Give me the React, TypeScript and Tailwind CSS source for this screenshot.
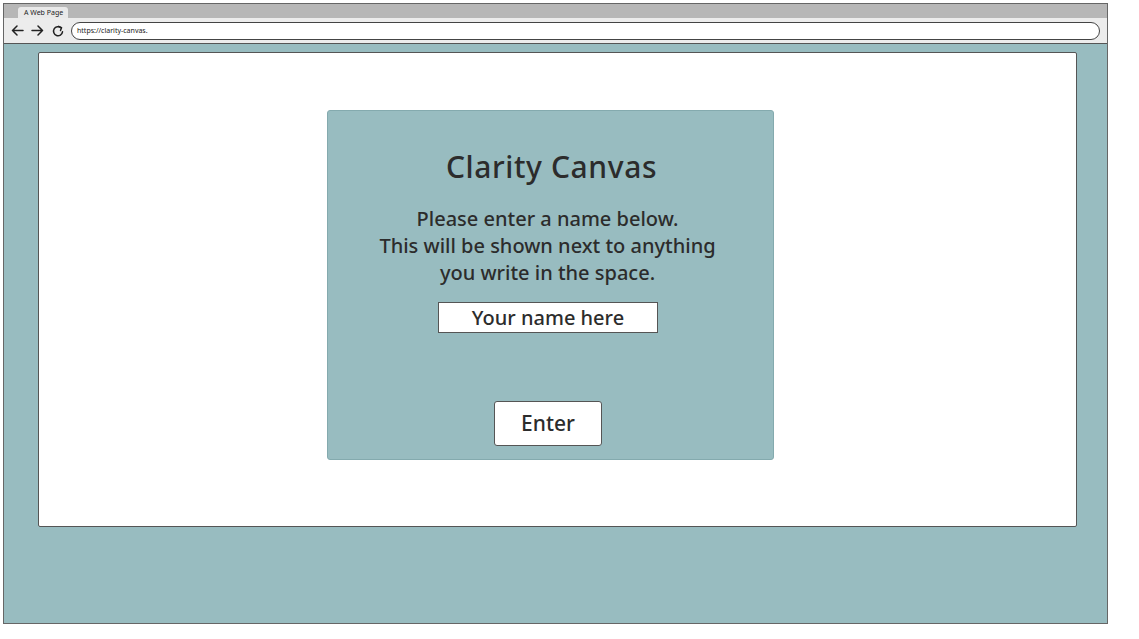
import React from 'react';

const font = { fontFamily: '"Noto Sans", "Open Sans", sans-serif' };

const Arrow: React.FC<{ flip?: boolean }> = ({ flip }) => (
  <svg width="13" height="11" viewBox="0 0 13 11" className={flip ? 'rotate-180' : ''}>
    <path d="M12 5.5H1.5M6 1L1.5 5.5 6 10" fill="none" stroke="#222" strokeWidth="1.5" strokeLinecap="round" strokeLinejoin="round" />
  </svg>
);

const Reload: React.FC = () => (
  <svg width="12" height="12" viewBox="0 0 12 12">
    <path d="M10.5 6.8A4.5 4.5 0 1 1 9 2.8" fill="none" stroke="#222" strokeWidth="1.5" strokeLinecap="round" />
    <path d="M6.6 1.4l3 1.2-1.1 2.9" fill="none" stroke="#222" strokeWidth="1.5" strokeLinecap="round" strokeLinejoin="round" />
  </svg>
);

export default function App() {
  return (
    <div className="w-[1139px] h-[639px] bg-white pt-[3px] pl-[3px]" style={font}>
      {/* Browser frame */}
      <div className="w-[1105px] h-[621px] border border-[#666] flex flex-col">
        {/* Tab strip */}
        <div className="h-[14px] bg-[#b7b7b7] flex items-end pl-[14px]">
          <div className="h-[11px] w-[50px] bg-[#e9e9e9] rounded-t-[3px] flex items-center pl-[6px] text-[7px] text-[#222] leading-none">
            A Web Page
          </div>
        </div>
        {/* Toolbar */}
        <div className="h-[26px] bg-[#ececec] border-b border-[#555] flex items-center pl-[7px] pr-[7px] gap-[7px]">
          <Arrow />
          <Arrow flip />
          <div className="ml-[1px]"><Reload /></div>
          <div className="flex-1 h-[18px] bg-white border border-[#444] rounded-full flex items-center pl-[5px] text-[7px] text-[#222] leading-none">
            https://clarity-canvas.
          </div>
        </div>
        {/* Page */}
        <div className="flex-1 bg-[#98bcc0] pt-[8px] pl-[34px]">
          <div className="w-[1039px] h-[475px] bg-white border border-[#555] rounded-[2px] pt-[57px] pl-[288px]">
            <div className="w-[447px] h-[350px] bg-[#98bcc0] border border-[#84aaae] rounded-[3px] flex flex-col items-center text-[#2c2c2c]">
              <h1 className="mt-[38px] ml-[2px] text-[30px] leading-[36px] font-medium tracking-[0.6px]">Clarity Canvas</h1>
              <p className="mt-[20px] mr-[6px] text-[20px] leading-[27px] text-center font-medium">
                Please enter a name below.
                <br />
                This will be shown next to anything
                <br />
                you write in the space.
              </p>
              <div className="mt-[16px] mr-[5px] w-[220px] h-[31px] bg-white border border-[#555] flex items-center justify-center text-[20px] font-medium leading-none">
                Your name here
              </div>
              <button className="mt-[68px] mr-[5px] w-[108px] h-[45px] bg-white border border-[#555] rounded-[3px] text-[21px] font-medium leading-none text-[#2c2c2c]">
                Enter
              </button>
            </div>
          </div>
        </div>
      </div>
    </div>
  );
}
